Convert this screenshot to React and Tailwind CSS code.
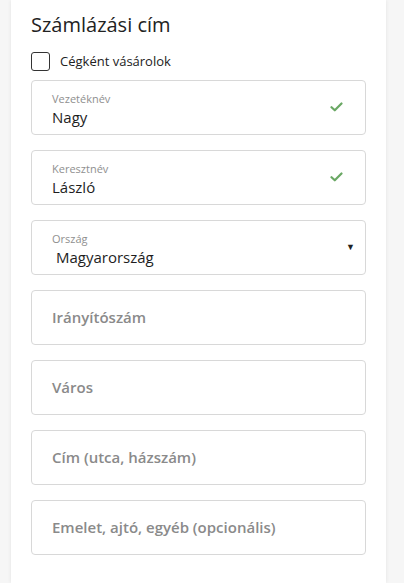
import React from "react";

function Check() {
  return (
    <svg width="13" height="10" viewBox="0 0 13 10" className="shrink-0">
      <path d="M1.5 5.2 L4.8 8.3 L11.5 1.5" fill="none" stroke="#6aa864" strokeWidth="2.2" strokeLinecap="round" strokeLinejoin="round" />
    </svg>
  );
}

function Filled({ label, value, check, select }) {
  return (
    <div className="h-[55px] rounded-[4px] border border-[#d8d8d8] bg-white flex items-center pl-[20px] pr-[10px]">
      <div className="flex-1 flex flex-col pt-[4px]">
        <span className="text-[11px] leading-[14px] text-[#8f8f8f]">{label}</span>
        <span className={"text-[15px] leading-[20px] mt-[1px] text-[#1e1e1e] " + (select ? "pl-[4px]" : "")}>{value}</span>
      </div>
      {check && <div className="pr-[12px]"><Check /></div>}
      {select && <span className="text-[9px] text-[#222]">▼</span>}
    </div>
  );
}

function Empty({ text }) {
  return (
    <div className="h-[55px] rounded-[4px] border border-[#d8d8d8] bg-white flex items-center pl-[20px]">
      <span className="text-[15px] font-semibold text-[#8a8a8a]">{text}</span>
    </div>
  );
}

export default function App() {
  return (
    <div className="min-h-[583px] bg-[#f6f6f6] pl-[11px] pr-[18px] overflow-hidden" style={{ fontFamily: '"Open Sans", "Noto Sans", sans-serif' }}>
      <div className="bg-white min-h-[583px] shadow-[0_0_4px_rgba(0,0,0,0.08)] px-[20px] pt-[11px] pb-[28px]">
        <h2 className="text-[20px] leading-[28px] text-[#222]">Számlázási cím</h2>
        <div className="flex items-center gap-[10px] mt-[13px]">
          <div className="w-[19px] h-[19px] rounded-[3px] border border-[#333]" />
          <span className="text-[13px] text-[#222]">Cégként vásárolok</span>
        </div>
        <div className="flex flex-col gap-[15px] mt-[8px]">
          <Filled label="Vezetéknév" value="Nagy" check />
          <Filled label="Keresztnév" value="László" check />
          <Filled label="Ország" value="Magyarország" select />
          <Empty text="Irányítószám" />
          <Empty text="Város" />
          <Empty text="Cím (utca, házszám)" />
          <Empty text="Emelet, ajtó, egyéb (opcionális)" />
        </div>
      </div>
    </div>
  );
}
